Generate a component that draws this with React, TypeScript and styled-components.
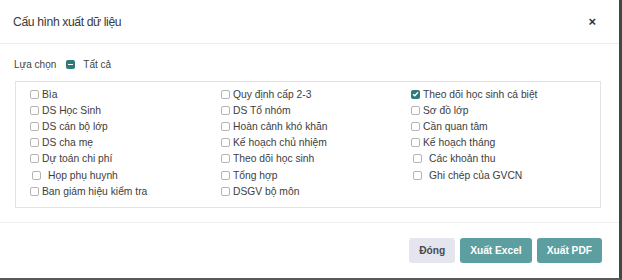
import styled, { createGlobalStyle } from "styled-components";
import { useState } from "react";

const GlobalStyle = createGlobalStyle`
  * { box-sizing: border-box; }
  body {
    margin: 0;
    font-family: "Liberation Sans", Arial, sans-serif;
    background: #ffffff;
  }
`;

const columns: { label: string; pad?: boolean }[][] = [
  [
    { label: "Bìa" },
    { label: "DS Học Sinh" },
    { label: "DS cán bộ lớp" },
    { label: "DS cha mẹ" },
    { label: "Dự toán chi phí" },
    { label: "Họp phụ huynh", pad: true },
    { label: "Ban giám hiệu kiểm tra" },
  ],
  [
    { label: "Quy định cấp 2-3" },
    { label: "DS Tổ nhóm" },
    { label: "Hoàn cảnh khó khăn" },
    { label: "Kế hoạch chủ nhiệm" },
    { label: "Theo dõi học sinh" },
    { label: "Tổng hợp" },
    { label: "DSGV bộ môn" },
  ],
  [
    { label: "Theo dõi học sinh cá biệt" },
    { label: "Sơ đồ lớp" },
    { label: "Cần quan tâm" },
    { label: "Kế hoạch tháng" },
    { label: "Các khoản thu", pad: true },
    { label: "Ghi chép của GVCN", pad: true },
  ],
];

const App = () => {
  const [checked, setChecked] = useState<string[]>(["Theo dõi học sinh cá biệt"]);

  const toggle = (label: string) => {
    setChecked((prev) =>
      prev.includes(label) ? prev.filter((l) => l !== label) : [...prev, label]
    );
  };

  return (
    <Page>
      <GlobalStyle />
      <Header>
        <Title>Cấu hình xuất dữ liệu</Title>
        <Close>×</Close>
      </Header>
      <Body>
        <SelectRow>
          <span>Lựa chọn</span>
          <MinusBox />
          <span>Tất cả</span>
        </SelectRow>
        <OptionBox>
          {columns.map((col, i) => (
            <Column key={i}>
              {col.map((item) => (
                <Item key={item.label} pad={item.pad} onClick={() => toggle(item.label)}>
                  <Check on={checked.includes(item.label)}>
                    {checked.includes(item.label) && (
                      <svg width="7" height="6" viewBox="0 0 7 6">
                        <path
                          d="M1 3.2 L2.8 4.8 L6 1.2"
                          stroke="#fff"
                          strokeWidth="1.4"
                          fill="none"
                        />
                      </svg>
                    )}
                  </Check>
                  {item.label}
                </Item>
              ))}
            </Column>
          ))}
        </OptionBox>
      </Body>
      <Footer>
        <Button kind="light">Đóng</Button>
        <Button kind="teal">Xuất Excel</Button>
        <Button kind="teal">Xuất PDF</Button>
      </Footer>
    </Page>
  );
};

export default App;

const Page = styled.div`
  width: 622px;
  height: 280px;
  display: flex;
  flex-direction: column;
  background: #fff;
  border-right: 3px solid #454545;
  border-bottom: 2px solid #5a5a5a;
  overflow: hidden;
`;

const Header = styled.div`
  height: 44px;
  display: flex;
  align-items: center;
  justify-content: space-between;
  padding: 0 23px 0 13px;
  border-bottom: 1px solid #ececec;
`;

const Title = styled.div`
  font-size: 12.2px;
  letter-spacing: -0.4px;
  color: #3a3a3a;
`;

const Close = styled.div`
  font-size: 13px;
  font-weight: 700;
  color: #333;
`;

const Body = styled.div`
  padding: 13px 18px 0 14px;
`;

const SelectRow = styled.div`
  display: flex;
  align-items: center;
  gap: 6px;
  font-size: 10px;
  color: #444;
  height: 14px;
  margin-bottom: 10px;
`;

const MinusBox = styled.div`
  width: 9px;
  height: 9px;
  border-radius: 2px;
  background: #2f7a7b;
  position: relative;
  margin: 0 2px 0 4px;
  &::after {
    content: "";
    position: absolute;
    left: 2px;
    right: 2px;
    top: 4px;
    height: 1.5px;
    background: #fff;
  }
`;

const OptionBox = styled.div`
  border: 1px solid #e3e3e3;
  display: grid;
  grid-template-columns: 191px 190px 1fr;
  padding: 4px 0 9px 14px;
  height: 127px;
  margin-left: 1px;
`;

const Column = styled.div`
  display: flex;
  flex-direction: column;
`;

const Item = styled.div<{ pad?: boolean }>`
  height: 16.2px;
  display: flex;
  align-items: center;
  font-size: 10.3px;
  color: #3d3d3d;
  cursor: pointer;
  gap: ${({ pad }) => (pad ? "7px" : "3px")};
  padding-left: ${({ pad }) => (pad ? "2px" : "0")};
`;

const Check = styled.span<{ on: boolean }>`
  width: 9px;
  height: 9px;
  border-radius: 2px;
  border: ${({ on }) => (on ? "none" : "1px solid #b5b5b5")};
  background: ${({ on }) => (on ? "#2f7a7b" : "#fff")};
  display: flex;
  align-items: center;
  justify-content: center;
  flex-shrink: 0;
`;

const Footer = styled.div`
  margin-top: auto;
  height: 56px;
  border-top: 1px solid #f0f0f0;
  display: flex;
  justify-content: flex-end;
  align-items: flex-start;
  gap: 5px;
  padding: 15px 17px 0 0;
`;

const Button = styled.div<{ kind: "light" | "teal" }>`
  height: 25px;
  padding: 0 10px;
  border-radius: 3px;
  display: flex;
  align-items: center;
  font-size: 10.2px;
  font-weight: 700;
  color: ${({ kind }) => (kind === "light" ? "#4a4a4a" : "#fff")};
  background: ${({ kind }) => (kind === "light" ? "#e4e5ee" : "#5d9fa0")};
  cursor: pointer;
`;
